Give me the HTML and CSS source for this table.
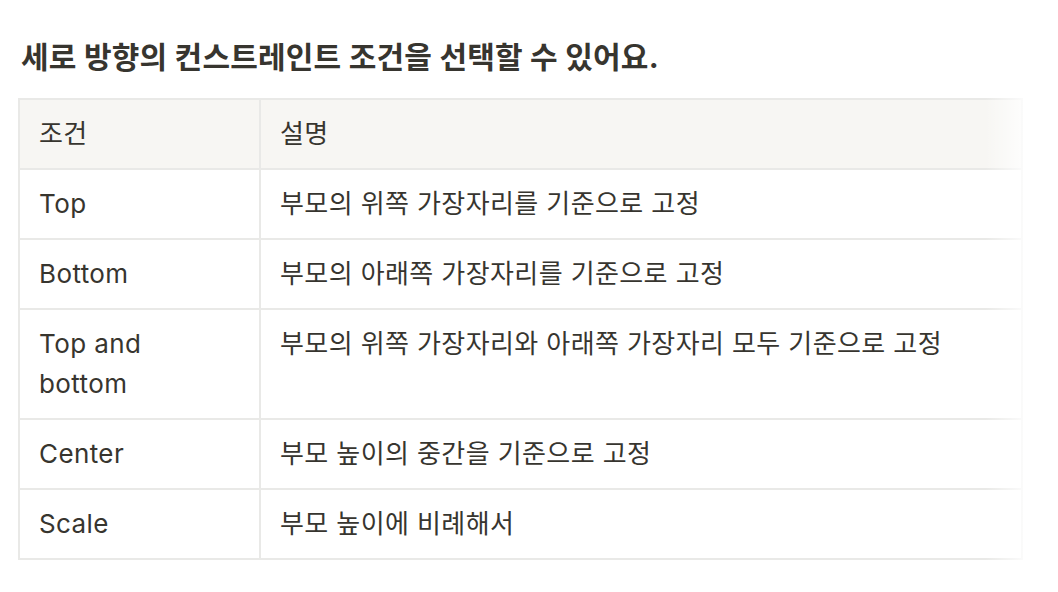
FILE: index.html
```html
<!DOCTYPE html>
<html lang="ko">
<head>
    <meta charset="UTF-8">
    <meta name="viewport" content="width=device-width, initial-scale=1.0">
    <title>세로 컨스트레인트</title>
    <link rel="stylesheet" href="styles.css">
</head>
<body>
    <div class="page">
        <h2 class="title">세로 방향의 컨스트레인트 조건을 선택할 수 있어요.</h2>

        <div class="table-wrap">
            <table class="table">
                <thead>
                    <tr>
                        <th class="col-name">조건</th>
                        <th>설명</th>
                    </tr>
                </thead>
                <tbody>
                    <tr>
                        <td class="col-name">Top</td>
                        <td>부모의 위쪽 가장자리를 기준으로 고정</td>
                    </tr>
                    <tr>
                        <td class="col-name">Bottom</td>
                        <td>부모의 아래쪽 가장자리를 기준으로 고정</td>
                    </tr>
                    <tr>
                        <td class="col-name">Top and bottom</td>
                        <td>부모의 위쪽 가장자리와 아래쪽 가장자리 모두 기준으로 고정</td>
                    </tr>
                    <tr>
                        <td class="col-name">Center</td>
                        <td>부모 높이의 중간을 기준으로 고정</td>
                    </tr>
                    <tr>
                        <td class="col-name">Scale</td>
                        <td>부모 높이에 비례해서</td>
                    </tr>
                </tbody>
            </table>
            <!-- scroll fade on the right edge -->
            <div class="fade"></div>
        </div>
    </div>
</body>
</html>
```

FILE: styles.css
```css
body {
    margin: 0;
    background-color: #fff;
    color: #37352f;
    font-family: Inter, "Noto Sans CJK KR", sans-serif;
}
.page {
    padding: 37px 35px 0 18px;
}
.title {
    margin: 0 0 21px 3px;
    font-size: 30px;
    font-weight: 700;
    line-height: 40px;
    letter-spacing: 0.2px;
}
.table-wrap {
    position: relative;
}
.table {
    width: 100%;
    border-collapse: collapse;
    font-size: 26px;
    line-height: 40px;
    letter-spacing: 0.4px;
}
.table th,
.table td {
    border: 2px solid #e9e9e7;
    padding: 14px 20px 14px 19px;
    text-align: left;
    vertical-align: top;
    font-weight: 400;
}
.table thead th {
    background-color: #f7f6f3;
}
.table .col-name {
    width: 186px;
    padding-right: 34px;
}
.fade {
    position: absolute;
    top: 0;
    right: -2px;
    bottom: 0;
    width: 40px;
    background: linear-gradient(to right, rgba(255, 255, 255, 0), rgba(255, 255, 255, 0.85));
}
```
